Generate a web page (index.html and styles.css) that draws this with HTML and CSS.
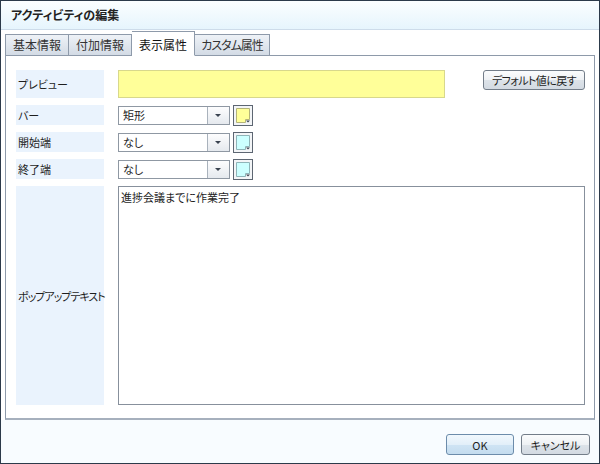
FILE: index.html
```html
<!DOCTYPE html>
<html lang="ja">
<head>
    <meta charset="UTF-8">
    <title>アクティビティの編集</title>
    <link rel="stylesheet" href="styles.css">
</head>
<body>
    <div class="dialog">
        <div class="titlebar">アクティビティの編集</div>

        <div class="main">
            <div class="tabs">
                <div class="tab">基本情報</div>
                <div class="tab">付加情報</div>
                <div class="tab active">表示属性</div>
                <div class="tab wide">カスタム属性</div>
            </div>

            <div class="panel">
                <div class="label">プレビュー</div>
                <div class="previewRow">
                    <div class="preview"></div>
                    <button class="btn resetBtn">デフォルト値に戻す</button>
                </div>

                <div class="label">バー</div>
                <div class="fieldRow">
                    <div class="select"><span class="selectValue">矩形</span><span class="selectBtn"></span></div>
                    <svg class="swatch" width="20" height="21" viewBox="0 0 20 21">
                        <rect x="0.5" y="0.5" width="19" height="20" fill="#f3f5f7" stroke="#5d6672"/>
                        <path d="M3.5 3.5 H16.5 V14.5 H12.5 V17.5 H3.5 Z" fill="#ffff99" stroke="#b4b47a"/>
                        <path d="M13 15.5 H17 L15 17.5 Z" fill="#3c4450"/>
                    </svg>
                </div>

                <div class="label">開始端</div>
                <div class="fieldRow">
                    <div class="select"><span class="selectValue">なし</span><span class="selectBtn"></span></div>
                    <svg class="swatch" width="20" height="21" viewBox="0 0 20 21">
                        <rect x="0.5" y="0.5" width="19" height="20" fill="#f3f5f7" stroke="#5d6672"/>
                        <path d="M3.5 3.5 H16.5 V14.5 H12.5 V17.5 H3.5 Z" fill="#ccffff" stroke="#8fb4b8"/>
                        <path d="M13 15.5 H17 L15 17.5 Z" fill="#3c4450"/>
                    </svg>
                </div>

                <div class="label">終了端</div>
                <div class="fieldRow">
                    <div class="select"><span class="selectValue">なし</span><span class="selectBtn"></span></div>
                    <svg class="swatch" width="20" height="21" viewBox="0 0 20 21">
                        <rect x="0.5" y="0.5" width="19" height="20" fill="#f3f5f7" stroke="#5d6672"/>
                        <path d="M3.5 3.5 H16.5 V14.5 H12.5 V17.5 H3.5 Z" fill="#ccffff" stroke="#8fb4b8"/>
                        <path d="M13 15.5 H17 L15 17.5 Z" fill="#3c4450"/>
                    </svg>
                </div>

                <div class="label narrow">ポップアップテキスト</div>
                <div class="popup">進捗会議までに作業完了</div>
            </div>
        </div>

        <div class="footer">
            <button class="btn okBtn">OK</button>
            <button class="btn cancelBtn">キャンセル</button>
        </div>
    </div>
</body>
</html>
```

FILE: styles.css
```css
body{
    margin: 0;
    font-family: "Noto Sans CJK JP", "Liberation Sans", sans-serif;
    font-size: 11px;
    font-feature-settings: "palt";
    color: #1e1e1e;
}
.dialog{
    width: 600px;
    height: 464px;
    box-sizing: border-box;
    border: 1px solid #2c3a4a;
    display: flex;
    flex-direction: column;
    background: #fff;
}
.titlebar{
    height: 28px;
    line-height: 28px;
    padding-left: 10px;
    border-bottom: 1px solid #cddcea;
    background: linear-gradient(to bottom, #fbfeff, #e6f5fd);
    font-size: 12px;
    font-weight: bold;
    color: #222;
}
.main{
    flex: 1;
    display: flex;
    flex-direction: column;
    margin: 0 4px;
    padding-top: 2px;
}
.tabs{
    display: flex;
    align-items: flex-end;
    height: 24px;
    margin-bottom: -1px;
    position: relative;
    z-index: 1;
}
.tab{
    width: 62px;
    height: 20px;
    line-height: 20px;
    text-align: center;
    white-space: nowrap;
    border: 1px solid #8e9aaa;
    border-left: none;
    background: linear-gradient(to bottom, #eef2f7, #d3dbe5);
    font-size: 12px;
    color: #333;
}
.tab:first-child{
    border-left: 1px solid #8e9aaa;
}
.tab.wide{
    width: 74px;
    letter-spacing: -1px;
}
.tab.active{
    height: 23px;
    line-height: 25px;
    background: #fff;
    border-bottom-color: #fff;
    color: #111;
}
.panel{
    flex: 1;
    border: 1px solid #8e9aaa;
    border-bottom: 2px solid #a6b0bd;
    padding: 14px 9px 13px 10px;
    display: grid;
    grid-template-columns: 88px 1fr;
    grid-template-rows: 28px 20px 20px 20px 1fr;
    column-gap: 14px;
    row-gap: 7px;
}
.label{
    background: #eaf3fd;
    display: flex;
    align-items: center;
    padding-left: 2px;
    white-space: nowrap;
}
.label.narrow{
    letter-spacing: -1px;
}
.previewRow{
    display: flex;
    align-items: flex-start;
    justify-content: space-between;
}
.preview{
    width: 325px;
    height: 26px;
    background: #ffff99;
    border: 1px solid #d8d88c;
}
.btn{
    font-family: inherit;
    font-size: 11px;
    font-feature-settings: "palt";
    height: 20px;
    padding: 0 2px;
    white-space: nowrap;
    border: 1px solid #737d89;
    border-radius: 3px;
    background: linear-gradient(to bottom, #fbfcfd 0%, #eef1f4 50%, #dde3e9 51%, #d3dae2 100%);
    color: #1e1e1e;
}
.resetBtn{
    width: 102px;
    letter-spacing: -0.6px;
}
.fieldRow{
    display: flex;
    align-items: center;
}
.select{
    width: 110px;
    height: 17px;
    border: 1px solid #8f98a3;
    display: flex;
    background: #fff;
}
.selectValue{
    flex: 1;
    line-height: 17px;
    padding-left: 4px;
}
.selectBtn{
    width: 21px;
    border-left: 1px solid #a9b2bc;
    background: linear-gradient(to bottom, #fdfdfe, #e5e9ee);
    position: relative;
}
.selectBtn::after{
    content: "";
    position: absolute;
    left: 7px;
    top: 7px;
    border-left: 3px solid transparent;
    border-right: 3px solid transparent;
    border-top: 3px solid #3a4350;
}
.swatch{
    margin-left: 3px;
}
.popup{
    border: 1px solid #87909c;
    padding: 1px 2px;
    line-height: 18px;
}
.footer{
    height: 43px;
    background: #f8fcff;
    display: flex;
    justify-content: flex-end;
    align-items: flex-start;
    padding: 14px 9px 0 0;
    box-sizing: border-box;
    gap: 7px;
}
.okBtn{
    width: 68px;
    height: 21px;
    border-color: #6c8cab;
    background: linear-gradient(to bottom, #f1f8fd 0%, #e2eff9 50%, #cfe4f4 51%, #c4dcef 100%);
}
.cancelBtn{
    width: 69px;
    height: 21px;
}
```
